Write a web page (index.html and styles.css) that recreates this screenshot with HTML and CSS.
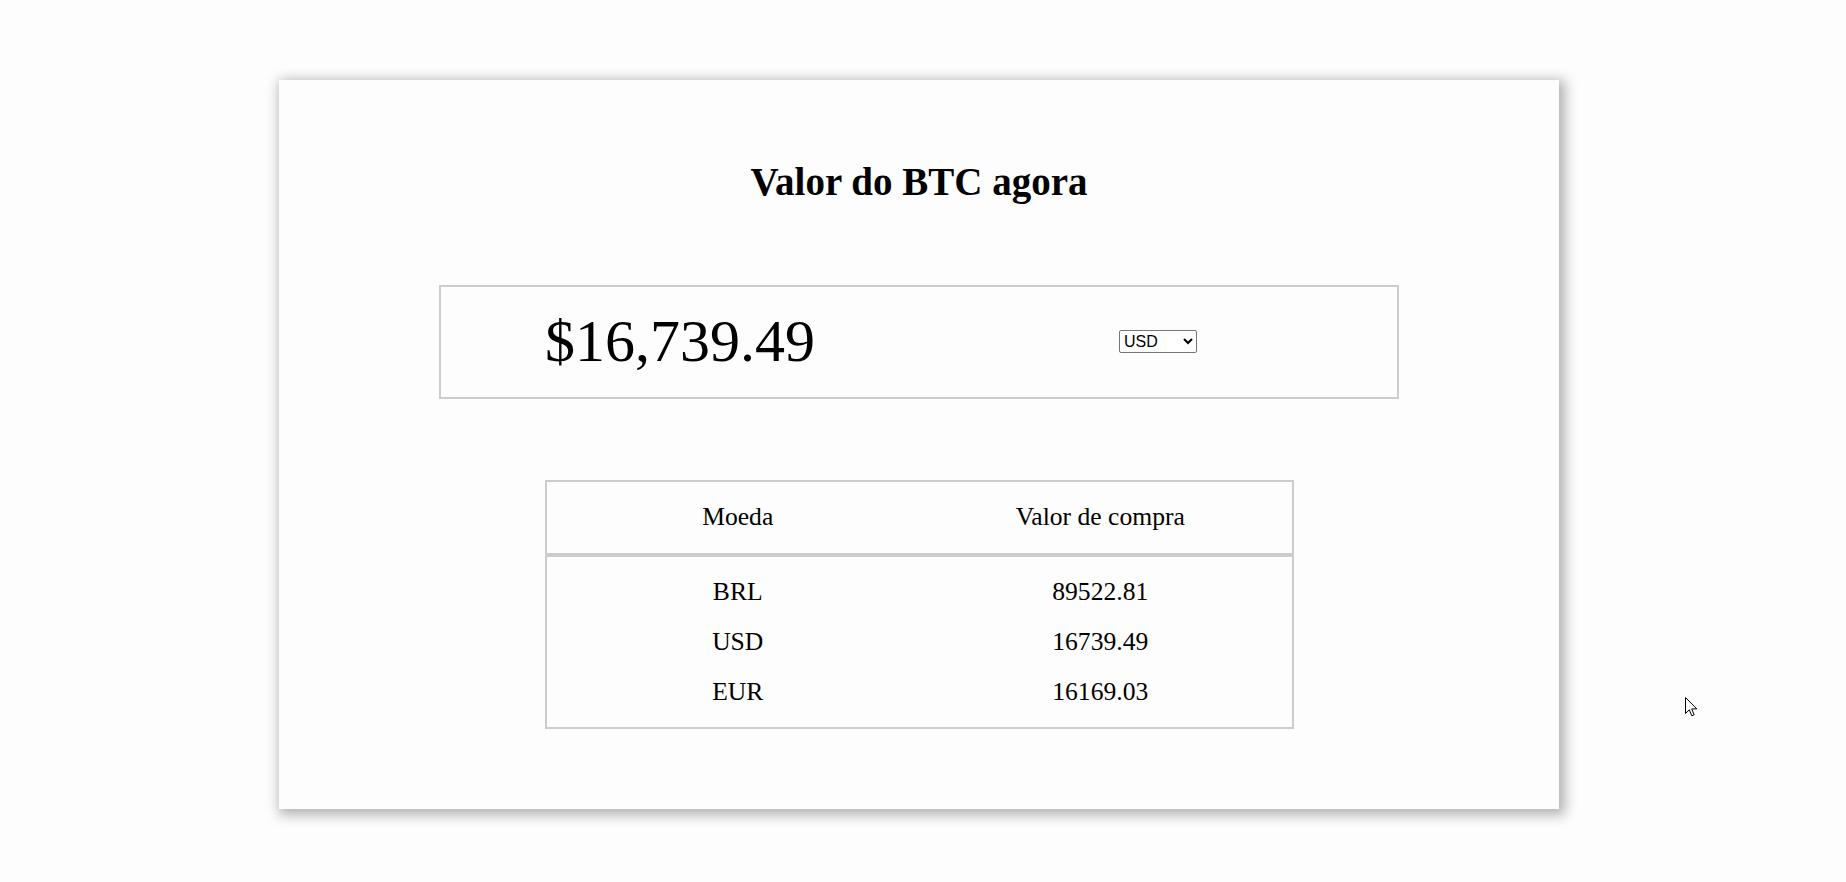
FILE: index.html
```html
<!DOCTYPE html>
<html lang="pt-BR">
<head>
<meta charset="utf-8">
<title>Valor do BTC agora</title>
<link rel="stylesheet" href="styles.css">
</head>
<body>
<main class="card">
  <h1 class="title">Valor do BTC agora</h1>
  <section class="price-box">
    <div class="price-col"><span class="price">$16,739.49</span></div>
    <div class="price-col">
      <select class="currency">
        <option>USD</option>
        <option>BRL</option>
        <option>EUR</option>
      </select>
    </div>
  </section>
  <table class="rates">
    <colgroup><col class="rates-col"><col class="rates-col"></colgroup>
    <thead>
      <tr><th>Moeda</th><th>Valor de compra</th></tr>
    </thead>
    <tbody>
      <tr><td>BRL</td><td>89522.81</td></tr>
      <tr><td>USD</td><td>16739.49</td></tr>
      <tr><td>EUR</td><td>16169.03</td></tr>
    </tbody>
  </table>
</main>
<svg class="cursor" width="13" height="20" viewBox="0 0 13 20" aria-hidden="true">
  <path d="M0.5 0.5 L0.5 16.5 L4.3 12.8 L6.8 18.8 L9.2 17.8 L6.7 11.9 L11.8 11.9 Z" fill="#fff" stroke="#000" stroke-width="1" stroke-linejoin="miter"/>
</svg>
</body>
</html>
```

FILE: styles.css
```css
html, body {
  margin: 0;
  background: #fdfdfd;
}

body {
  position: relative;
  box-sizing: border-box;
  min-height: 882px;
  padding: 80px 8px 0 0;
  font-family: "Liberation Serif", "Times New Roman", serif;
  color: #000;
}

.card {
  width: 1280px;
  margin: 0 auto;
  box-sizing: border-box;
  padding: 80px 0 80px;
  display: flex;
  flex-direction: column;
  align-items: center;
  gap: 81px;
  background: #fdfdfd;
  box-shadow: 3px 3px 12px 3px rgba(0, 0, 0, 0.3);
}

.title {
  margin: 0;
  font-size: 39px;
  line-height: 44px;
  font-weight: 700;
  text-align: center;
}

.price-box {
  width: 960px;
  box-sizing: border-box;
  border: 2px solid #ccc;
  padding: 20px 0 20.5px;
  display: flex;
  align-items: center;
}

.price-col {
  flex: 1;
  display: flex;
  justify-content: center;
  align-items: center;
}

.price {
  font-size: 60px;
  line-height: normal;
}

.currency {
  width: 78px;
  height: 23px;
  font-family: "Liberation Sans", Arial, sans-serif;
  font-size: 16px;
  color: #000;
  background: #fff;
  border: 1px solid #767676;
  border-radius: 2px;
}

.rates {
  width: 749px;
  table-layout: fixed;
  border: 2px solid #ccc;
  border-spacing: 0;
  font-size: 25.6px;
  line-height: normal;
}

.rates-col {
  width: 50%;
}

.rates th,
.rates td {
  font-weight: 400;
  text-align: center;
  padding: 10px 10px 10px 20px;
}

.rates th:last-child,
.rates td:last-child {
  padding-left: 10px;
  padding-right: 20px;
}

.rates th {
  padding-top: 20px;
  padding-bottom: 21px;
  border-bottom: 4px solid #ccc;
}

.rates tbody tr:first-child td {
  padding-top: 20px;
}

.rates tbody tr:last-child td {
  padding-bottom: 20px;
}

.cursor {
  position: absolute;
  left: 1685px;
  top: 697px;
}
```
